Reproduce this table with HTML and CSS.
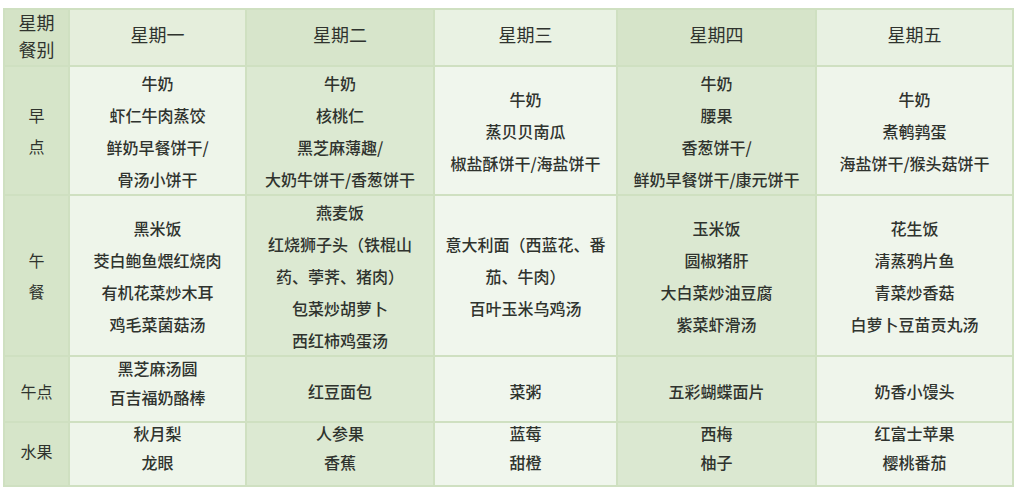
FILE: index.html
```html
<!DOCTYPE html>
<html lang="zh">
<head>
<meta charset="utf-8">
<link rel="stylesheet" href="styles.css">
</head>
<body>
<div class="menu">
  <div class="cell head c0 corner"><div>星期</div><div>餐别</div></div>
  <div class="cell head c1">星期一</div>
  <div class="cell head c2">星期二</div>
  <div class="cell head c3">星期三</div>
  <div class="cell head c4">星期四</div>
  <div class="cell head c5">星期五</div>

  <div class="cell label c0 stack"><div>早</div><div>点</div></div>
  <div class="cell c1"><div>牛奶</div><div>虾仁牛肉蒸饺</div><div>鲜奶早餐饼干/</div><div>骨汤小饼干</div></div>
  <div class="cell c2"><div>牛奶</div><div>核桃仁</div><div>黑芝麻薄趣/</div><div>大奶牛饼干/香葱饼干</div></div>
  <div class="cell c3"><div>牛奶</div><div>蒸贝贝南瓜</div><div>椒盐酥饼干/海盐饼干</div></div>
  <div class="cell c4"><div>牛奶</div><div>腰果</div><div>香葱饼干/</div><div>鲜奶早餐饼干/康元饼干</div></div>
  <div class="cell c5"><div>牛奶</div><div>煮鹌鹑蛋</div><div>海盐饼干/猴头菇饼干</div></div>

  <div class="cell label c0 stack"><div>午</div><div>餐</div></div>
  <div class="cell c1"><div>黑米饭</div><div>茭白鲍鱼煨红烧肉</div><div>有机花菜炒木耳</div><div>鸡毛菜菌菇汤</div></div>
  <div class="cell c2"><div>燕麦饭</div><div>红烧狮子头（铁棍山</div><div>药、荸荠、猪肉）</div><div>包菜炒胡萝卜</div><div>西红柿鸡蛋汤</div></div>
  <div class="cell c3"><div>意大利面（西蓝花、番</div><div>茄、牛肉）</div><div>百叶玉米乌鸡汤</div></div>
  <div class="cell c4"><div>玉米饭</div><div>圆椒猪肝</div><div>大白菜炒油豆腐</div><div>紫菜虾滑汤</div></div>
  <div class="cell c5"><div>花生饭</div><div>清蒸鸦片鱼</div><div>青菜炒香菇</div><div>白萝卜豆苗贡丸汤</div></div>

  <div class="cell label c0 short single">午点</div>
  <div class="cell c1 short double"><div>黑芝麻汤圆</div><div>百吉福奶酪棒</div></div>
  <div class="cell c2 short single">红豆面包</div>
  <div class="cell c3 short single">菜粥</div>
  <div class="cell c4 short single">五彩蝴蝶面片</div>
  <div class="cell c5 short single">奶香小馒头</div>

  <div class="cell label c0 short fruit">水果</div>
  <div class="cell c1 short double"><div>秋月梨</div><div>龙眼</div></div>
  <div class="cell c2 short double"><div>人参果</div><div>香蕉</div></div>
  <div class="cell c3 short double"><div>蓝莓</div><div>甜橙</div></div>
  <div class="cell c4 short double"><div>西梅</div><div>柚子</div></div>
  <div class="cell c5 short double"><div>红富士苹果</div><div>樱桃番茄</div></div>
</div>
</body>
</html>
```

FILE: styles.css
```css
html, body {
  margin: 0;
  background: #ffffff;
}
body {
  padding: 8px 0 0 3px;
  font-family: "Noto Sans CJK SC", "Noto Sans", sans-serif;
  color: #2f332e;
  font-weight: 500;
}
.menu {
  display: grid;
  width: 1011px;
  box-sizing: border-box;
  grid-template-columns: 63px 175px 186px 181px 197px 195px;
  grid-template-rows: 55px 127px 159px 64px 62px;
  gap: 2px;
  padding: 2px;
  background: #cfe0c1;
}
.cell {
  display: flex;
  flex-direction: column;
  align-items: center;
  justify-content: center;
  text-align: center;
  font-size: 16px;
  line-height: 32px;
  white-space: nowrap;
  box-sizing: border-box;
}
.short {
  line-height: 29.5px;
}
.short.double {
  padding-bottom: 12px;
}
.short.single {
  padding-top: 6px;
}
.short.fruit {
  padding-bottom: 4px;
}
.head {
  font-size: 18px;
  font-weight: 400;
  padding-bottom: 7px;
}
.corner {
  line-height: 27px;
  padding-bottom: 4px;
}
.stack {
  line-height: 31px;
}
.label {
  font-weight: 400;
}
.c0 { background: #d6e5c9; }
.c1 { background: #eef5ea; }
.c2 { background: #dce9d2; }
.c3 { background: #f0f6ed; }
.c4 { background: #dbe8d1; }
.c5 { background: #eff5eb; }
.head.c0 { background: #d4e3c6; }
.head.c1 { background: #e5eedc; }
.head.c2 { background: #d7e5cb; }
.head.c3 { background: #e9f2e3; }
.head.c4 { background: #d6e4c9; }
.head.c5 { background: #e8f1e2; }
```
